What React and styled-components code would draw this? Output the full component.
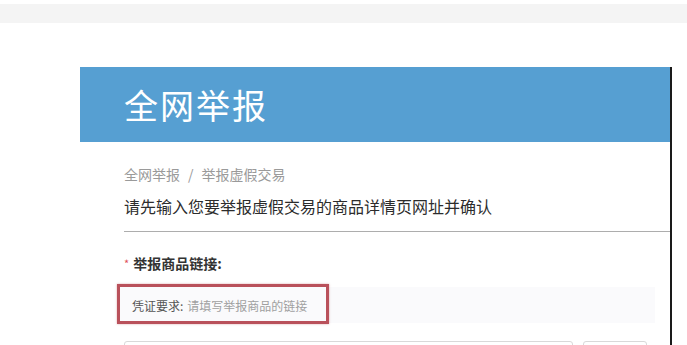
import React from "react";
import styled, { createGlobalStyle } from "styled-components";

const Global = createGlobalStyle`
  body {
    margin: 0;
    background: #fff;
    font-family: "Noto Sans CJK SC", "Noto Sans", sans-serif;
    overflow: hidden;
  }
`;

const TopBar = styled.div`
  margin-top: 4px;
  height: 19px;
  background: #f4f4f4;
`;

const Panel = styled.div`
  margin: 44px 0 0 80px;
  width: 590px;
  height: 278px;
  overflow: hidden;
  border-right: 2px solid #1a1a1a;
`;

const Header = styled.div`
  height: 75px;
  background: #569fd2;
  display: flex;
  align-items: center;
  padding-left: 44px;
`;

const Title = styled.h1`
  margin: 0;
  font-size: 34px;
  font-weight: 400;
  color: #fff;
  line-height: 1;
  letter-spacing: 2px;
`;

const Body = styled.div`
  padding: 22px 0 0 44px;
`;

const Crumbs = styled.div`
  display: flex;
  gap: 8px;
  font-size: 14px;
  line-height: 20px;
  color: #9a9a9a;
`;

const Heading = styled.div`
  margin-top: 10px;
  font-size: 16px;
  line-height: 24px;
  color: #2c2c2c;
`;

const Divider = styled.hr`
  margin: 13px 0 0;
  border: 0;
  border-top: 1px solid #adadad;
`;

const Label = styled.div`
  margin-top: 21px;
  font-size: 14px;
  line-height: 20px;
  font-weight: 700;
  color: #333;
  display: flex;
  align-items: center;
  gap: 4px;
`;

const Star = styled.span`
  color: #e0505a;
  font-weight: 400;
  font-size: 11px;
`;

const Hint = styled.div`
  position: relative;
  margin: 14px 0 0 -6px;
  width: 523px;
  height: 36px;
  padding-left: 14px;
  background: #fafafc;
  display: flex;
  align-items: center;
  font-size: 12px;
  color: #a0a0a0;
`;

const HintKey = styled.span`
  color: #555;
  margin-right: 4px;
`;

const Highlight = styled.div`
  position: absolute;
  left: -1px;
  top: -3px;
  width: 206px;
  height: 34px;
  border: 3px solid #b9515b;
  box-shadow: 0 0 2px rgba(185, 81, 91, 0.5);
`;

const InputRow = styled.div`
  margin-top: 18px;
  display: flex;
  gap: 10px;
`;

const Input = styled.div`
  width: 447px;
  height: 30px;
  border: 1px solid #d9d9d9;
  border-radius: 3px;
`;

const Button = styled.div`
  width: 62px;
  height: 30px;
  border: 1px solid #d9d9d9;
  border-radius: 3px;
`;

export default function App() {
  return (
    <>
      <Global />
      <TopBar />
      <Panel>
        <Header>
          <Title>全网举报</Title>
        </Header>
        <Body>
          <Crumbs>
            <span>全网举报</span>
            <span>/</span>
            <span>举报虚假交易</span>
          </Crumbs>
          <Heading>请先输入您要举报虚假交易的商品详情页网址并确认</Heading>
          <Divider />
          <Label>
            <Star>*</Star>
            举报商品链接:
          </Label>
          <Hint>
            <HintKey>凭证要求:</HintKey>
            请填写举报商品的链接
            <Highlight />
          </Hint>
          <InputRow>
            <Input />
            <Button />
          </InputRow>
        </Body>
      </Panel>
    </>
  );
}
